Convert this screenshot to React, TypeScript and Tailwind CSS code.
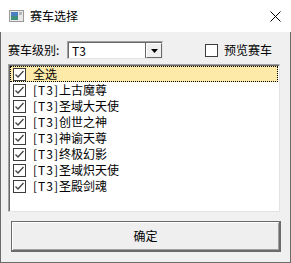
import React from 'react';

const cars = ['上古魔尊', '圣域大天使', '创世之神', '神谕天尊', '终极幻影', '圣域炽天使', '圣殿剑魂'];

function CheckBox({ checked }: { checked: boolean }) {
  return (
    <svg width="13" height="13" viewBox="0 0 13 13" className="shrink-0">
      <rect x="0.5" y="0.5" width="12" height="12" fill="#fff" stroke="#3c3c3c" />
      {checked && <path d="M2.5 6.5 L5 9 L10.5 3" fill="none" stroke="#444" strokeWidth="1.3" />}
    </svg>
  );
}

export default function App() {
  const [selected, setSelected] = React.useState<boolean[]>(cars.map(() => true));
  const [preview, setPreview] = React.useState(false);
  const all = selected.every(Boolean);

  return (
    <div
      className="w-[291px] h-[263px] flex flex-col text-[12px] text-black"
      style={{ fontFamily: '"Noto Sans CJK SC", "Liberation Sans", sans-serif' }}
    >
      {/* Title bar */}
      <div className="h-[32px] bg-white flex items-center pl-[9px] pr-[10px]">
        <svg width="15" height="12" viewBox="0 0 15 12">
          <rect x="0.5" y="0.5" width="14" height="11" fill="#e8e8e8" stroke="#9a9a9a" />
          <rect x="2" y="2" width="7" height="8" fill="#3f8f7a" />
          <rect x="2" y="2" width="7" height="4" fill="#4a7fc0" />
          <rect x="10" y="2" width="3" height="3" fill="#b8b8b8" />
        </svg>
        <span className="ml-[6px] text-[12px]">赛车选择</span>
        <svg width="11" height="11" viewBox="0 0 11 11" className="ml-auto">
          <path d="M0.5 0.5 L10.5 10.5 M10.5 0.5 L0.5 10.5" stroke="#000" strokeWidth="1" />
        </svg>
      </div>

      {/* Body */}
      <div className="flex-1 bg-[#f0f0f0] border-l border-r border-b border-[#6b6b6b] flex flex-col pl-[7px] pr-[10px] pt-[9px]">
        <div className="h-[18px] flex items-center">
          <span className="w-[59px]">赛车级别:</span>
          <div className="w-[96px] h-[18px] bg-white border border-t-[#a0a0a0] border-l-[#a0a0a0] border-r-[#e3e3e3] border-b-[#e3e3e3] flex">
            <div className="flex-1 flex items-center pl-[3px] border-t border-l border-[#696969]">T3</div>
            <div className="w-[17px] border-t border-l border-[#696969] bg-white flex">
              <div className="flex-1 bg-[#f0f0f0] border border-t-white border-l-white border-r-[#696969] border-b-[#696969] flex items-center justify-center">
                <svg width="7" height="4" viewBox="0 0 7 4">
                  <path d="M0 0 H7 L3.5 4 Z" fill="#000" />
                </svg>
              </div>
            </div>
          </div>
          <label className="ml-[42px] flex items-center gap-[6px] cursor-pointer" onClick={() => setPreview(!preview)}>
            <CheckBox checked={preview} />
            <span>预览赛车</span>
          </label>
        </div>

        {/* List */}
        <div className="mt-[5px] w-[272px] h-[148px] bg-white border border-t-[#a0a0a0] border-l-[#a0a0a0] border-r-[#e3e3e3] border-b-[#e3e3e3]">
          <div className="h-full border-t border-l border-[#696969] pr-[1px]">
            <div
              className="h-[16px] bg-[#fdeaa9] border border-dotted border-black flex items-center pl-[2px] gap-[7px] cursor-pointer"
              onClick={() => setSelected(cars.map(() => !all))}
            >
              <CheckBox checked={all} />
              <span>全选</span>
            </div>
            {cars.map((c, i) => (
              <div
                key={c}
                className="h-[16px] flex items-center pl-[3px] gap-[7px] cursor-pointer"
                onClick={() => setSelected(selected.map((v, j) => (j === i ? !v : v)))}
              >
                <CheckBox checked={selected[i]} />
                <span>
                  <span className="tracking-[1px]">[T3]</span>
                  {c}
                </span>
              </div>
            ))}
          </div>
        </div>

        {/* Button */}
        <button className="mt-[9px] ml-[3px] w-[270px] h-[31px] bg-[#efefef] border border-[#6b6b6b] border-r-2 border-b-2 shadow-[inset_1px_1px_0_#fff,inset_-1px_-1px_0_#a0a0a0] flex items-center justify-center text-[12px]">
          确定
        </button>
      </div>
    </div>
  );
}
